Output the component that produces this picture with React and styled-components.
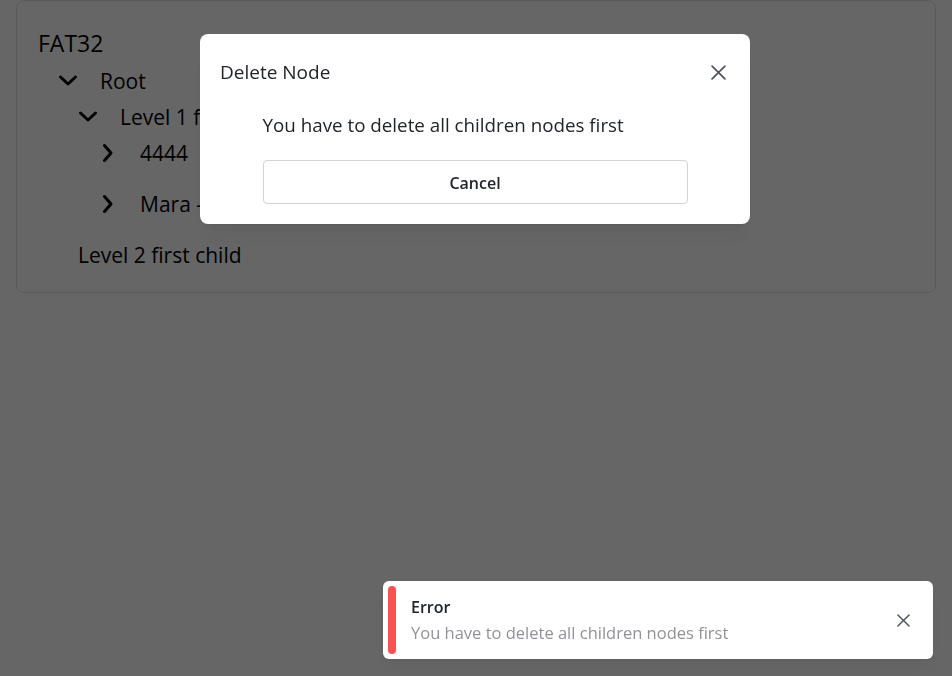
import React from 'react'
import styled, { createGlobalStyle } from 'styled-components'

const GlobalStyle = createGlobalStyle`
    html, body {
        margin: 0;
        padding: 0;
        background: #fff;
        font-family: "Open Sans", "Noto Sans", sans-serif;
        color: #000;
    }
`

const ChevronDown = () => (
    <svg width="20" height="20" viewBox="0 0 20 20" fill="none">
        <polyline points="2.5,6 10,13 17.5,6" stroke="currentColor" strokeWidth="3" strokeLinecap="round" strokeLinejoin="round" />
    </svg>
)

const ChevronRight = () => (
    <svg width="20" height="20" viewBox="0 0 20 20" fill="none">
        <polyline points="6.5,2.5 13,10 6.5,17.5" stroke="currentColor" strokeWidth="3" strokeLinecap="round" strokeLinejoin="round" />
    </svg>
)

const CloseIcon = ({ size = 14 }) => (
    <svg width={size} height={size} viewBox="0 0 14 14" fill="none">
        <path d="M1 1L13 13M13 1L1 13" stroke="currentColor" strokeWidth="1.5" strokeLinecap="round" />
    </svg>
)

const tree = [
    { label: 'Root', level: 1, icon: 'down' },
    { label: 'Level 1 first child', level: 2, icon: 'down' },
    { label: '4444', level: 3, icon: 'right' },
    { label: 'Mara - second child', level: 3, icon: 'right', tall: true },
    { label: 'Level 2 first child', level: 2 },
]

const App = () => {
    return (
        <>
            <GlobalStyle />
            <Page>
                <Card>
                    <TreeTitle>FAT32</TreeTitle>
                    {tree.map(node => (
                        <Row key={node.label} level={node.level} tall={node.tall}>
                            {node.icon && (
                                <Toggle>{node.icon === 'down' ? <ChevronDown /> : <ChevronRight />}</Toggle>
                            )}
                            <Label>{node.label}</Label>
                        </Row>
                    ))}
                </Card>
            </Page>

            <Overlay />

            <Modal>
                <ModalHeader>
                    <ModalTitle>Delete Node</ModalTitle>
                    <CloseButton><CloseIcon size={15} /></CloseButton>
                </ModalHeader>
                <ModalBody>
                    <Message>You have to delete all children nodes first</Message>
                    <CancelButton>Cancel</CancelButton>
                </ModalBody>
            </Modal>

            <Toast>
                <ToastText>
                    <ToastTitle>Error</ToastTitle>
                    <ToastDescription>You have to delete all children nodes first</ToastDescription>
                </ToastText>
                <ToastClose><CloseIcon size={13} /></ToastClose>
            </Toast>
        </>
    )
}

export default App

const Page = styled.div`
    padding: 0 16px;
    height: 676px;
`

const Card = styled.div`
    border: 1px solid #dee2e6;
    border-radius: 8px;
    background: #fff;
    padding: 27px 21px 19px;
`

const TreeTitle = styled.div`
    font-size: 23px;
    line-height: 30px;
    margin-bottom: 5px;
`

const Row = styled.div`
    display: flex;
    align-items: center;
    height: ${p => (p.tall ? '66px' : '36px')};
    padding-left: ${p => p.level * 20}px;
`

const Toggle = styled.span`
    display: flex;
    width: 20px;
    height: 20px;
    margin-right: 22px;
    color: #000;
`

const Label = styled.span`
    font-size: 21px;
    line-height: 1;
`

const Overlay = styled.div`
    position: fixed;
    inset: 0;
    background: rgba(0, 0, 0, 0.6);
`

const Modal = styled.div`
    position: fixed;
    top: 34px;
    left: 200px;
    width: 550px;
    box-sizing: border-box;
    background: #fff;
    border-radius: 8px;
    padding: 26px 20px 20px;
    box-shadow: 0 1px 3px rgba(0, 0, 0, 0.05), 0 20px 25px -5px rgba(0, 0, 0, 0.05), 0 10px 10px -5px rgba(0, 0, 0, 0.04);
    color: #212529;
`

const ModalHeader = styled.div`
    display: flex;
    align-items: center;
    justify-content: space-between;
    height: 24px;
`

const ModalTitle = styled.div`
    font-size: 19px;
    line-height: 24px;
`

const CloseButton = styled.button`
    display: flex;
    align-items: center;
    justify-content: center;
    width: 28px;
    height: 28px;
    margin-right: -2px;
    padding: 0;
    border: none;
    background: transparent;
    color: #495057;
    cursor: pointer;
`

const ModalBody = styled.div`
    width: 425px;
    margin: 28px auto 0;
    display: flex;
    flex-direction: column;
    gap: 21px;
`

const Message = styled.div`
    font-size: 18.8px;
    line-height: 27px;
`

const CancelButton = styled.button`
    height: 44px;
    padding-top: 2px;
    border: 1px solid #ced4da;
    border-radius: 4px;
    background: #fff;
    font-family: inherit;
    font-size: 16px;
    font-weight: 600;
    color: #212529;
    cursor: pointer;
`

const Toast = styled.div`
    position: fixed;
    right: 19px;
    bottom: 17px;
    width: 550px;
    height: 78px;
    box-sizing: border-box;
    display: flex;
    align-items: center;
    padding: 0 16px 0 28px;
    background: #fff;
    border-radius: 6px;
    box-shadow: 0 1px 3px rgba(0, 0, 0, 0.05), 0 10px 15px -5px rgba(0, 0, 0, 0.05);

    &::before {
        content: '';
        position: absolute;
        left: 5px;
        top: 5px;
        bottom: 5px;
        width: 8px;
        border-radius: 4px;
        background: #fa5252;
    }
`

const ToastText = styled.div`
    flex: 1;
    display: flex;
    flex-direction: column;
    gap: 4px;
`

const ToastTitle = styled.div`
    font-size: 16px;
    line-height: 22px;
    font-weight: 600;
    color: #212529;
`

const ToastDescription = styled.div`
    font-size: 16.5px;
    line-height: 22px;
    color: #909296;
`

const ToastClose = styled.button`
    display: flex;
    align-items: center;
    justify-content: center;
    width: 28px;
    height: 28px;
    padding: 0;
    border: none;
    background: transparent;
    color: #495057;
    cursor: pointer;
`
